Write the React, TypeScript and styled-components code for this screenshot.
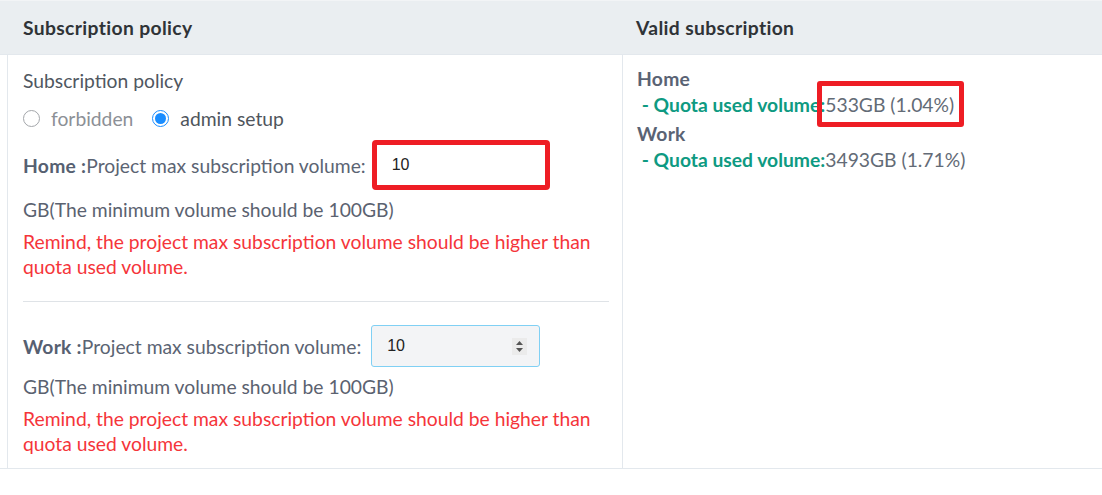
import React from "react";
import styled, { createGlobalStyle } from "styled-components";

const GlobalStyle = createGlobalStyle`
  body {
    margin: 0;
    background: #ffffff;
    font-family: "Lato", "Liberation Sans", sans-serif;
  }
`;

const Table = styled.div`
  width: 1102px;
  font-size: 19.3px;
  line-height: 25px;
  color: #5b6473;
  b {
    letter-spacing: 0.25px;
  }
`;

const HeadRow = styled.div`
  display: grid;
  grid-template-columns: 622px 1fr;
  height: 54px;
  background: #eaeef1;
  border-top: 1px solid #f2f4f6;
  box-sizing: border-box;
`;

const HeadCell = styled.div<{ pad: number }>`
  display: flex;
  align-items: center;
  padding-left: ${(p) => p.pad}px;
  font-weight: 700;
  letter-spacing: 0.35px;
  color: #2f3337;
`;

const BodyRow = styled.div`
  display: grid;
  grid-template-columns: 622px 1fr;
  border-top: 1px solid #e3e8ed;
  border-bottom: 1px solid #e3e8ed;
`;

const LeftCell = styled.div`
  margin-left: 7px;
  border-left: 1px solid #e3e8ed;
  padding: 13px 13px 12px 15px;
`;

const RightCell = styled.div`
  border-left: 1px solid #e3e8ed;
  padding: 11px 14px 0 14px;
  line-height: 26px;
`;

const PolicyTitle = styled.div`
  color: #50575f;
`;

const RadioRow = styled.div`
  display: flex;
  align-items: center;
  margin-top: 13px;
  height: 25px;
`;

const RadioOption = styled.label<{ checked?: boolean }>`
  display: flex;
  align-items: center;
  margin-right: 19px;
  color: ${(p) => (p.checked ? "#4f555c" : "#8c9096")};
`;

const RadioDot = styled.span<{ checked?: boolean }>`
  width: 17px;
  height: 17px;
  box-sizing: border-box;
  border-radius: 50%;
  border: 1px solid ${(p) => (p.checked ? "#1a8dff" : "#a3a6aa")};
  margin-right: 11px;
  display: flex;
  align-items: center;
  justify-content: center;
  &::after {
    content: "";
    display: ${(p) => (p.checked ? "block" : "none")};
    width: 11px;
    height: 11px;
    border-radius: 50%;
    background: #1a8dff;
  }
`;

const StoreBlock = styled.div<{ first?: boolean }>`
  margin-top: ${(p) => (p.first ? 9 : 0)}px;
`;

const VolumeRow = styled.div<{ tall?: boolean }>`
  display: flex;
  align-items: center;
  height: ${(p) => (p.tall ? 50 : 42)}px;
`;

const Label = styled.span`
  b {
    font-weight: 700;
    color: #566071;
  }
`;

const HighlightInput = styled.input`
  margin-left: 6px;
  width: 178px;
  height: 50px;
  box-sizing: border-box;
  border: 5px solid #ee1d24;
  border-radius: 4px;
  padding: 0 15px;
  font-family: "Liberation Sans", Arial, sans-serif;
  font-size: 16px;
  color: #222;
  background: #fff;
  outline: none;
`;

const NumberField = styled.div`
  margin-left: 10px;
  width: 169px;
  height: 42px;
  box-sizing: border-box;
  display: flex;
  align-items: center;
  border: 1px solid #80d0f4;
  border-radius: 3px;
  background: #f3f4f6;
  padding: 0 12px 0 15px;
`;

const NumberInput = styled.input`
  flex: 1;
  min-width: 0;
  border: 0;
  background: transparent;
  padding: 0;
  font-family: "Liberation Sans", Arial, sans-serif;
  font-size: 16px;
  color: #222;
  outline: none;
`;

const Spinner = styled.span`
  width: 15px;
  height: 17px;
  background: #ebebeb;
  display: flex;
  align-items: center;
  justify-content: center;
`;

const Hint = styled.div`
  margin-top: 7px;
  color: #5b6270;
`;

const Warning = styled.div`
  margin-top: 7px;
  color: #f5353a;
  width: 580px;
`;

const Divider = styled.hr`
  border: 0;
  border-top: 1px solid #dfe3e7;
  margin: 22px 0 23px 0;
`;

const StoreName = styled.div<{ gap?: boolean }>`
  font-weight: 700;
  letter-spacing: 0.25px;
  color: #5a6374;
  margin-top: ${(p) => (p.gap ? 3 : 0)}px;
`;

const QuotaLine = styled.div``;

const QuotaLabel = styled.span`
  font-weight: 700;
  color: #0e9a82;
`;

const QuotaValue = styled.span<{ marked?: boolean }>`
  position: relative;
  color: #636b76;
  &::after {
    content: "";
    display: ${(p) => (p.marked ? "block" : "none")};
    position: absolute;
    left: -8px;
    right: -10px;
    top: -12px;
    bottom: -11px;
    border: 5px solid #ee1d24;
    border-radius: 3px;
  }
`;

const stores = [
  { name: "Home", value: "10", tall: true },
  { name: "Work", value: "10", tall: false },
];

function App() {
  return (
    <>
      <GlobalStyle />
      <Table>
        <HeadRow>
          <HeadCell pad={23}>Subscription policy</HeadCell>
          <HeadCell pad={14}>Valid subscription</HeadCell>
        </HeadRow>
        <BodyRow>
          <LeftCell>
            <PolicyTitle>Subscription policy</PolicyTitle>
            <RadioRow>
              <RadioOption>
                <RadioDot />
                forbidden
              </RadioOption>
              <RadioOption checked>
                <RadioDot checked />
                admin setup
              </RadioOption>
            </RadioRow>
            {stores.map((s, i) => (
              <React.Fragment key={s.name}>
                {i > 0 && <Divider />}
                <StoreBlock first={i === 0}>
                  <VolumeRow tall={s.tall}>
                    <Label>
                      <b>{s.name} :</b>Project max subscription volume:
                    </Label>
                    {s.tall ? (
                      <HighlightInput defaultValue={s.value} />
                    ) : (
                      <NumberField>
                        <NumberInput defaultValue={s.value} />
                        <Spinner>
                          <svg width="9" height="13" viewBox="0 0 9 13">
                            <path d="M4.5 1 L8 5 L1 5 Z" fill="#555" />
                            <path d="M4.5 12 L8 8 L1 8 Z" fill="#555" />
                          </svg>
                        </Spinner>
                      </NumberField>
                    )}
                  </VolumeRow>
                  <Hint>GB(The minimum volume should be 100GB)</Hint>
                  <Warning>
                    Remind, the project max subscription volume should be higher
                    than quota used volume.
                  </Warning>
                </StoreBlock>
              </React.Fragment>
            ))}
          </LeftCell>
          <RightCell>
            <StoreName>Home</StoreName>
            <QuotaLine>
              <QuotaLabel>&nbsp;- Quota used volume:</QuotaLabel>
              <QuotaValue marked>533GB (1.04%)</QuotaValue>
            </QuotaLine>
            <StoreName gap>Work</StoreName>
            <QuotaLine>
              <QuotaLabel>&nbsp;- Quota used volume:</QuotaLabel>
              <QuotaValue>3493GB (1.71%)</QuotaValue>
            </QuotaLine>
          </RightCell>
        </BodyRow>
      </Table>
    </>
  );
}

export default App;
